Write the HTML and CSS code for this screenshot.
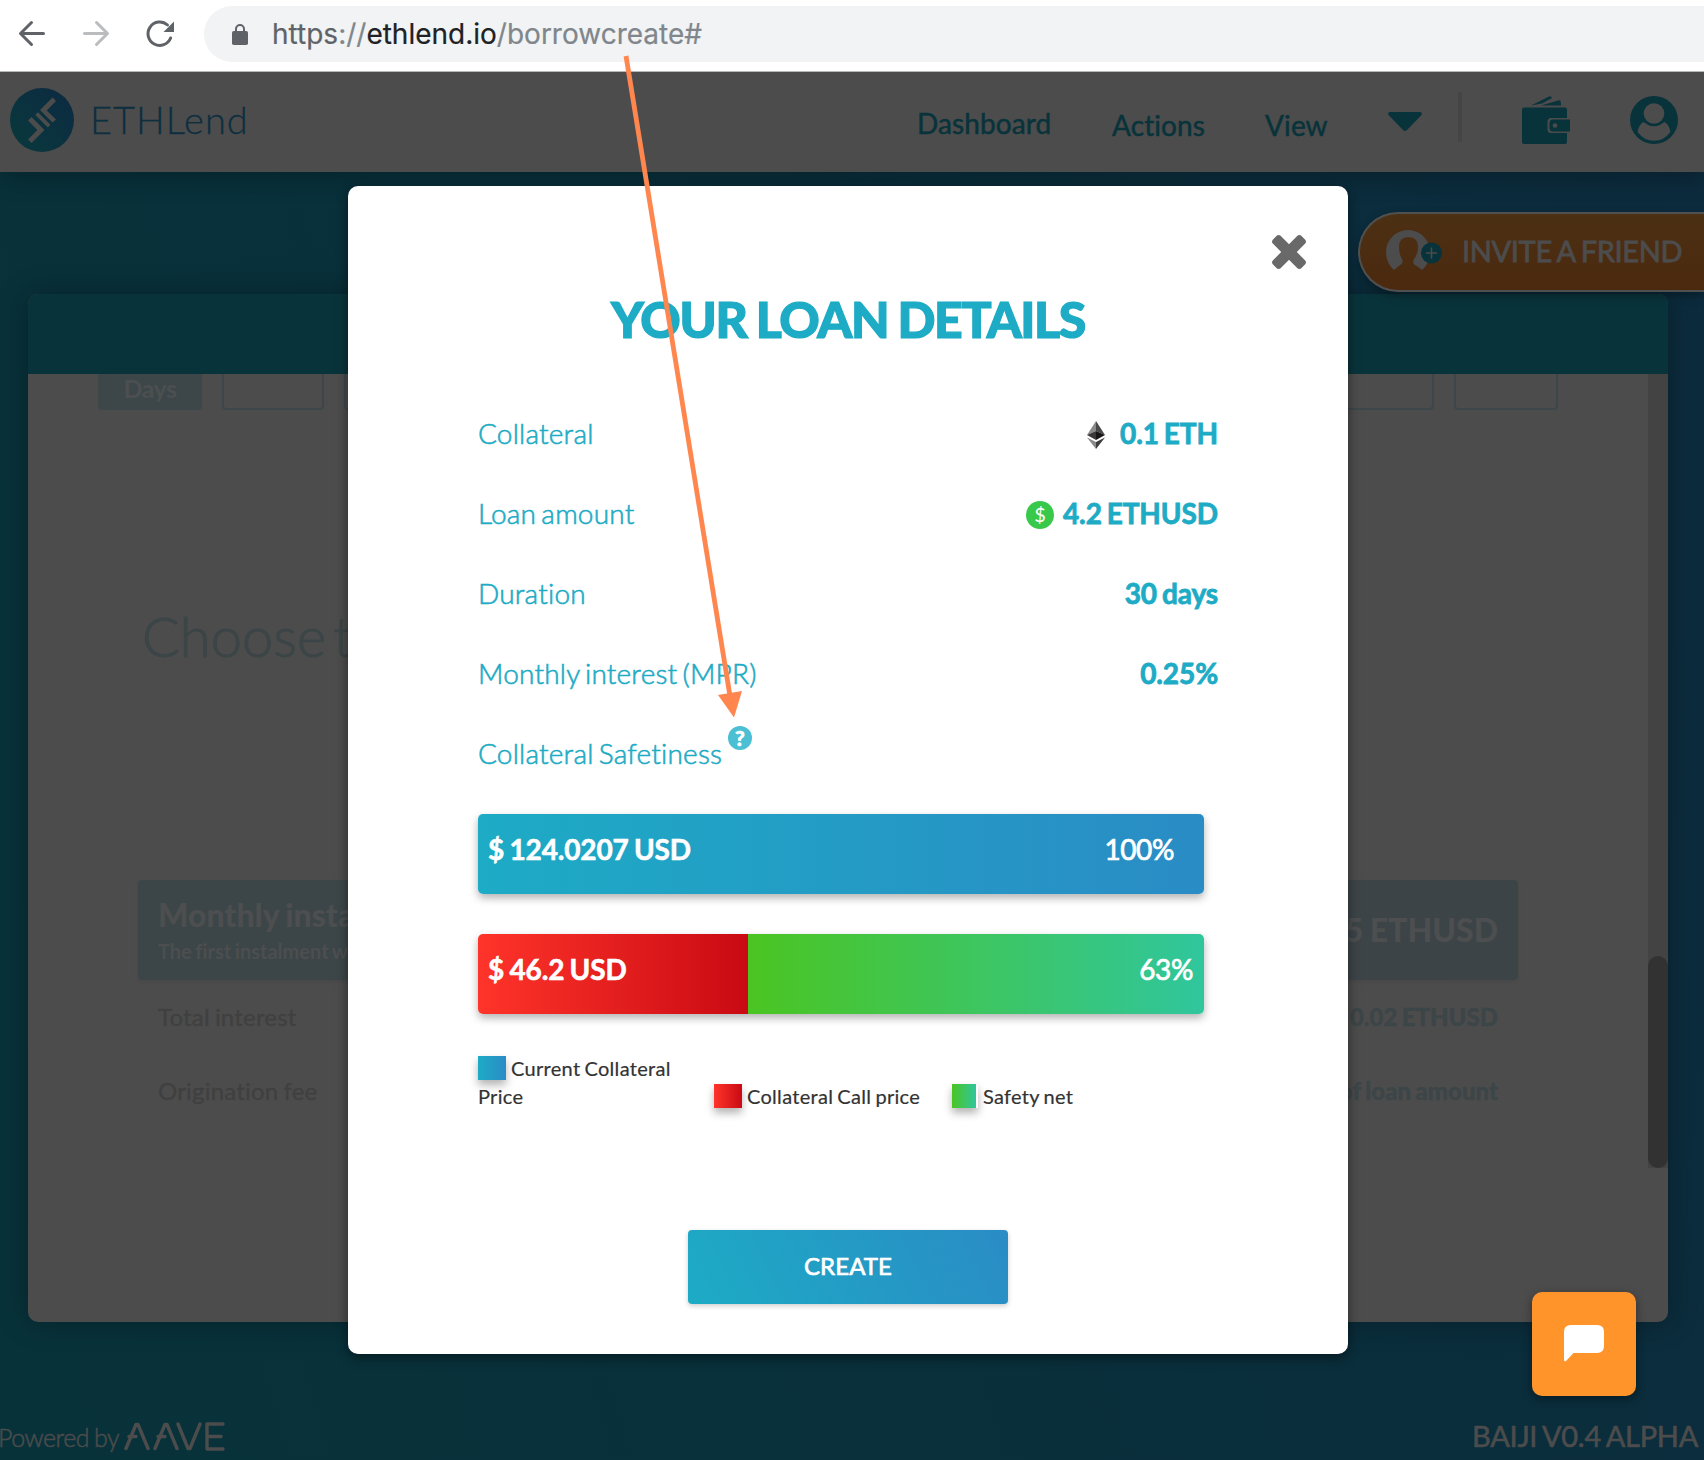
FILE: index.html
```html
<!DOCTYPE html>
<html lang="en">
<head>
<meta charset="utf-8">
<title>ETHLend</title>
<link rel="stylesheet" href="styles.css">
</head>
<body>
<div class="toolbar">
  <svg class="tool-icons" width="204" height="62" viewBox="0 0 204 62" fill="none" stroke-width="3" stroke-linecap="round" stroke-linejoin="round">
    <path d="M43.500 33.500H21M31.500 22.500L20.500 33.500L31.500 44.500" stroke="#5f6368"/>
    <path d="M84.500 33.500H107M96.500 22.500L107.500 33.500L96.500 44.500" stroke="#babcbe"/>
    <path d="M170.600 38A11.700 11.700 0 1 1 167.500 25" stroke="#5f6368"/>
    <path d="M174 21.500V32H163.500Z" fill="#5f6368"/>
  </svg>
  <div class="address">
    <svg width="16" height="21" viewBox="0 0 16 21"><rect y="7" width="16" height="14" rx="1.800" fill="#5f6368"/><path d="M4 8V5a4 4 0 0 1 8 0v3" fill="none" stroke="#5f6368" stroke-width="2"/></svg>
    <div class="url"><span class="scheme">https</span>://<span class="host">ethlend.io</span>/borrowcreate#</div>
  </div>
</div>
<div class="app">
  <nav class="nav">
    <svg class="logo" width="64" height="64" viewBox="0 0 64 64">
      <defs><linearGradient id="lg" x1="0" y1="1" x2="1" y2="0"><stop offset=".15" stop-color="#09373d"/><stop offset=".85" stop-color="#0c2c41"/></linearGradient></defs>
      <circle cx="32" cy="32" r="32" fill="url(#lg)"/>
      <g fill="#4c4c4c">
        <path d="M42.500 9.500L46 13L36.700 22.500L46 31.600L42.500 34.500L30 22Z"/>
        <path d="M28 24.200L40.500 36.700L37.800 39.400L25.300 26.900Z"/>
        <path d="M21.500 29L34.500 42L21.500 55L18 51.500L27.300 42L18 32.500Z"/>
      </g>
    </svg>
    <span class="brand">ETHLend</span>
    <div class="links"><span class="dash">Dashboard</span><span class="actions">Actions</span><span class="view">View</span></div>
    <svg class="caret" width="34" height="19" viewBox="0 0 34 19"><path d="M1.500 0H32.500Q35 1 33 3.500L19 18Q17 20 15 18L1 3.500Q-1 1 1.500 0Z" fill="#09333b"/></svg>
    <i class="divider"></i>
    <svg class="wallet" width="48" height="48" viewBox="0 0 48 48">
      <path d="M2 11.500H43Q45 11.500 45 13.500V22H29Q25.500 22 25.500 26V33Q25.500 37 29 37H45V46Q45 48 43 48H2Q0 48 0 46V13.500Q0 11.500 2 11.500Z" fill="#09333b"/>
      <path d="M9 9.500L27 .500Q29 -.300 30 2L20 7.500ZM19 9.500L37 4.200Q39 4 39 8.500V9.500Z" fill="#09333b"/>
      <path d="M31 23.500H48V35.500H31Q27.500 35.500 27.500 32V27Q27.500 23.500 31 23.500Z" fill="#09333b"/>
      <circle cx="33" cy="29.500" r="2.300" fill="#4c4c4c"/>
    </svg>
    <svg class="user" width="48" height="48" viewBox="0 0 48 48">
      <circle cx="24" cy="24" r="24" fill="#09333b"/>
      <circle cx="24" cy="17.500" r="10.300" fill="#4c4c4c"/>
      <path d="M13.500 26Q24 34.500 34.500 26Q39.500 29 40.300 36Q34 44.800 24 44.800Q14 44.800 7.700 36Q8.500 29 13.500 26Z" fill="#4c4c4c"/>
    </svg>
  </nav>

  <main class="card">
    <header class="card-head"></header>
    <div class="card-body">
      <div class="content">
        <div class="periods">
          <div class="period on">Days</div><div class="period"></div><div class="period"></div>
          <div class="spring"></div>
          <div class="period"></div><div class="period last"></div>
        </div>
        <h2 class="choose">Choose t</h2>
        <div class="instalment">
          <div><div class="inst-title">Monthly instalment</div><div class="inst-sub">The first instalment will</div></div>
          <div class="inst-value">1.415 ETHUSD</div>
        </div>
        <div class="fact"><span>Total interest</span><b>0.02 ETHUSD</b></div>
        <div class="fact"><span>Origination fee</span><b>1% of loan amount</b></div>
      </div>
      <div class="track"><div class="thumb"></div></div>
    </div>
  </main>

  <footer class="footer">
    <span class="powered">Powered by</span>
    <svg class="aave" width="101" height="29" viewBox="0 0 101 29" fill="none" stroke="#4c4c4c" stroke-width="3.400" stroke-linecap="round" stroke-linejoin="round">
      <path d="M2 26.500L12 2.500H14L24 26.500M5 14.500H12M31 26.500L41 2.500H43L53 26.500M34 14.500H41M54 2L64 26.500H66L76 2M99 2H83V27H99M83 14.500H97"/>
    </svg>
    <span class="version">BAIJI V0.4 ALPHA</span>
  </footer>
</div>

<div class="invite">
  <svg width="56" height="44" viewBox="0 0 56 44">
    <path d="M8 40Q0 33 0 22A22 22 0 0 1 44 22Q44 33 36 40Q34 38 29 35Q26 33 28 29Q32 24 32 17Q32 7 22.500 7Q13 7 13 17Q13 24 16 29Q18 33 14 35Z" fill="#4c4c4c"/>
    <circle cx="45.500" cy="23" r="10.500" fill="#09333b"/>
    <path d="M45.500 17.500V28.500M40 23H51" stroke="#4c4c4c" stroke-width="1.500"/>
  </svg>
  <span>INVITE A FRIEND</span>
</div>

<section class="modal">
  <svg class="close" width="34" height="34" viewBox="110 258 1188 1188"><path fill="#696969" d="M1298 1214q0 40-28 68l-136 136q-28 28-68 28t-68-28l-294-294-294 294q-28 28-68 28t-68-28l-136-136q-28-28-28-68t28-68l294-294-294-294q-28-28-28-68t28-68l136-136q28-28 68-28t68 28l294 294 294-294q28-28 68-28t68 28l136 136q28 28 28 68t-28 68l-294 294 294 294q28 28 28 68z"/></svg>
  <h1 class="title">YOUR LOAN DETAILS</h1>
  <div class="rows">
    <div class="row"><span>Collateral</span><b>
      <svg class="eth" width="18" height="28" viewBox="0 0 18 28"><path d="M9 0L0 14L9 10Z" fill="#8a8a8a"/><path d="M9 0L18 14L9 10Z" fill="#4a4848"/><path d="M9 10L0 14L9 19Z" fill="#3a3838"/><path d="M9 10L18 14L9 19Z" fill="#181616"/><path d="M0 16.500L9 21V28Z" fill="#8a8a8a"/><path d="M18 16.500L9 21V28Z" fill="#3f3d3d"/></svg>0.1 ETH</b></div>
    <div class="row"><span>Loan amount</span><b><i class="coin">$</i>4.2 ETHUSD</b></div>
    <div class="row"><span>Duration</span><b>30 days</b></div>
    <div class="row"><span>Monthly interest (MPR)</span><b>0.25%</b></div>
    <div class="row"><span>Collateral Safetiness<i class="help">?</i></span></div>
  </div>
  <div class="bar price"><b>$ 124.0207 USD</b><span>100%</span></div>
  <div class="bar split"><div class="call" style="width:37.2%"><b>$ 46.2 USD</b></div><div class="net"><span>63%</span></div></div>
  <div class="legend">
    <div class="key"><i class="sw blue"></i>Current Collateral Price</div>
    <div class="key"><i class="sw red"></i>Collateral Call price</div>
    <div class="key"><i class="sw green"></i>Safety net</div>
  </div>
  <button class="create">CREATE</button>
</section>

<div class="chat"><svg width="40" height="37" viewBox="0 0 40 37"><path d="M7 0H33Q40 0 40 7V21Q40 28 33 28H9.500L2 36Q0 37 0 35V7Q0 0 7 0Z" fill="#fff"/></svg></div>

<svg class="arrow" width="130" height="670" viewBox="0 0 130 670"><path d="M6 6L110 646" stroke="#ff874f" stroke-width="4.800"/><path d="M98 645L122 641L114 667.500Z" fill="#ff874f"/></svg>
</body>
</html>
```

FILE: styles.css
```css
* { box-sizing: border-box; }
body { margin: 0; position: relative; width: 1704px; height: 1460px; overflow: hidden; font-family: Lato, sans-serif; font-variant-ligatures: none; word-spacing: -.08em; background: #fff; }
svg { display: block; flex: none; }

.toolbar { position: relative; z-index: 1; display: flex; height: 72px; border-bottom: 1px solid #b4b8b8; background: #fff; }
.address { display: flex; align-items: center; flex: 1; height: 56px; margin-top: 6px; padding-left: 28px; border-radius: 28px 0 0 28px; background: #f1f3f4; }
.url { margin-left: 24px; font: 28px/58px Inter, sans-serif; color: #80868b; white-space: nowrap; -webkit-text-stroke: .2px; }
.scheme { color: #5f6368; }
.host { color: #202124; }

.app { display: flex; flex-direction: column; height: 1388px; background: linear-gradient(75deg, #08323a 0%, #09303b 45%, #0c2b3d 100%); }
.nav { display: flex; align-items: flex-start; height: 100px; padding-left: 10px; background: #4c4c4c; color: #09333b; box-shadow: 0 4px 24px rgba(0,0,0,.3); }
.logo { margin-top: 16px; }
.brand { width: 160px; margin-left: 16px; font-weight: 300; font-size: 38px; line-height: 95px; letter-spacing: 1px; color: #0d2f40; -webkit-text-stroke: .3px; }
.links { display: flex; margin-left: 667px; font-size: 28px; letter-spacing: .1px; -webkit-text-stroke: .5px; }
.links span { line-height: 106px; }
.dash { width: 195px; }
.links .dash { line-height: 103px; }
.actions { width: 153px; }
.view { width: 123px; }
.caret { margin-top: 40px; }
.divider { width: 4px; height: 50px; margin: 20px 60px 0 36px; background: #454545; }
.wallet { margin-top: 24px; }
.user { margin: 24px 0 0 60px; }

.card { display: flex; flex: none; flex-direction: column; width: 1640px; height: 1028px; margin: 122px 0 0 28px; border-radius: 10px; overflow: hidden; background: #4c4c4c; box-shadow: 0 0 30px rgba(0,0,0,.3); }
.card-head { height: 80px; background: #09333a; }
.card-body { display: flex; }
.content { width: 1620px; height: 794px; padding: 0 130px 0 110px; }
.track { width: 20px; height: 794px; padding-top: 582px; background: #434343; }
.thumb { height: 212px; border-radius: 10px; background: #323232; }
.periods { display: flex; gap: 20px; width: 1460px; height: 36px; margin-left: -40px; }
.period { width: 102px; border: 2px solid #3d4749; border-top: 0; border-radius: 0 0 4px 4px; }
.period.on { width: 104px; background: #3d474a; color: #4c4f50; font-size: 25px; font-weight: 700; line-height: 29px; letter-spacing: -.5px; text-align: center; }
.period.last { width: 104px; }
.spring { flex: 1; }
.choose { height: 68px; margin: 192px 0 0 4px; font-size: 56px; font-weight: 300; line-height: 68px; word-spacing: -8px; color: #3c4547; -webkit-text-stroke: 1px; }
.instalment { display: flex; align-items: center; justify-content: space-between; height: 100px; margin-top: 210px; padding: 0 20px; border-radius: 4px; background: linear-gradient(90deg, #3c4648, #3d4447); color: #4c4e4f; font-weight: 700; box-shadow: 0 2px 4px rgba(0,0,0,.06); }
.inst-title { padding-top: 2px; font-size: 32px; line-height: 40px; font-weight: 900; }
.inst-sub { font-size: 20px; line-height: 32px; }
.inst-value { margin-top: -2px; font-size: 32px; font-weight: 900; }
.fact { display: flex; justify-content: space-between; height: 74px; padding: 0 20px; font-size: 24px; line-height: 73px; letter-spacing: .2px; color: #404040; -webkit-text-stroke: .3px; }
.fact b { font-weight: 900; letter-spacing: 0; color: #3c4547; }

.footer { display: flex; align-items: center; flex: 1; padding: 90px 6px 0 0; line-height: 42px; color: #4c4c4c; }
.powered { width: 126px; margin-left: -2px; padding-top: 2px; white-space: nowrap; font-size: 25px; font-weight: 300; letter-spacing: -.5px; -webkit-text-stroke: .5px; }
.version { margin-left: auto; font-size: 29px; letter-spacing: -.3px; -webkit-text-stroke: .6px; }

.invite { position: absolute; left: 1358px; top: 212px; display: flex; align-items: center; width: 346px; height: 80px; padding-left: 26px; border: 2px solid #505050; border-right: 0; border-radius: 40px 0 0 40px; background: linear-gradient(#4c3014, #4b290f); color: #4c4c4c; font-size: 29px; box-shadow: 0 4px 10px rgba(0,0,0,.3); white-space: nowrap; }
.invite span { margin: -3px 0 0 20px; letter-spacing: -.35px; -webkit-text-stroke: .8px; }

.modal { position: absolute; left: 348px; top: 186px; display: flex; flex-direction: column; width: 1000px; height: 1168px; padding: 103px 130px 0; border-radius: 10px; background: #fff; box-shadow: 0 4px 12px rgba(0,0,0,.45); color: #1dabc5; }
.close { position: absolute; right: 42px; top: 49px; }
.title { margin: 0 0 44px; font-size: 50px; line-height: 60px; font-weight: 900; letter-spacing: -1.4px; text-align: center; white-space: nowrap; -webkit-text-stroke: 1.2px; }
.rows { height: 400px; }
.row { display: flex; justify-content: space-between; height: 80px; line-height: 80px; font-size: 28px; font-weight: 300; letter-spacing: .2px; word-spacing: -2.6px; -webkit-text-stroke: .6px; }
.row b { display: flex; align-items: center; font-weight: 700; letter-spacing: -.1px; word-spacing: -1.8px; -webkit-text-stroke: .8px; }
.eth { margin: 3px 15px 0 0; }
.coin { width: 28px; height: 28px; margin: 3px 9px 0 0; border-radius: 50%; background: #38c94b; color: #fff; font-style: normal; font-weight: 400; font-size: 20px; line-height: 27px; text-align: center; -webkit-text-stroke: 0; }
.help { display: inline-block; width: 24px; height: 24px; margin-left: 6px; border-radius: 50%; background: #4bbfd3; color: #fff; font: 900 21px/24px Lato, sans-serif; text-align: center; vertical-align: 18px; }
.row:last-child { align-items: flex-end; }
.bar { flex: none; display: flex; width: 726px; height: 80px; border-radius: 5px; box-shadow: 0 4px 8px rgba(0,0,0,.3); color: #fff; font-size: 28px; line-height: 70px; overflow: hidden; }
.price { justify-content: space-between; margin-top: 21px; padding: 0 30px 0 10px; background: linear-gradient(90deg, #1dabc5, #2a8cc5); }
.bar b { letter-spacing: -.15px; -webkit-text-stroke: .6px; }
.bar span { letter-spacing: -.4px; -webkit-text-stroke: .7px; }
.split { margin-top: 40px; }
.call { padding-left: 10px; background: linear-gradient(90deg, #ff342a, #c90a13); }
.net { flex: 1; padding-right: 11px; text-align: right; background: linear-gradient(90deg, #4bc522, #30c69d); }
.legend { display: flex; align-items: flex-end; height: 56px; margin-top: 40px; color: #333; font-size: 20px; line-height: 28px; letter-spacing: .3px; -webkit-text-stroke: .2px; }
.key:nth-child(1) { width: 236px; padding-right: 40px; }
.key:nth-child(2) { width: 238px; }
.sw { display: inline-block; width: 28px; height: 24px; margin-right: 5px; vertical-align: -4px; box-shadow: 0 5px 8px rgba(0,0,0,.3); }
.blue { background: linear-gradient(90deg, #1dabc5, #2a8cc5); }
.red { background: linear-gradient(90deg, #ff342a, #c90a13); }
.green { width: 26px; border-right: 2px solid #fff; background: linear-gradient(90deg, #4bc522, #30c69d); }
.create { width: 320px; height: 74px; margin: 120px 0 0 210px; padding: 0 0 3px; border: 0; border-radius: 4px; background: linear-gradient(63deg, #1dabc5, #2a8cc5); color: #fff; font: 24px/71px Lato, sans-serif; letter-spacing: .1px; -webkit-text-stroke: .7px; box-shadow: 0 2px 5px rgba(0,0,0,.2); }

.chat { position: absolute; left: 1532px; top: 1292px; display: flex; justify-content: center; padding-top: 33px; width: 104px; height: 104px; border-radius: 10px; background: #ff942b; box-shadow: 0 3px 10px rgba(0,0,0,.4); }
.arrow { position: absolute; z-index: 2; left: 620px; top: 50px; }
```
